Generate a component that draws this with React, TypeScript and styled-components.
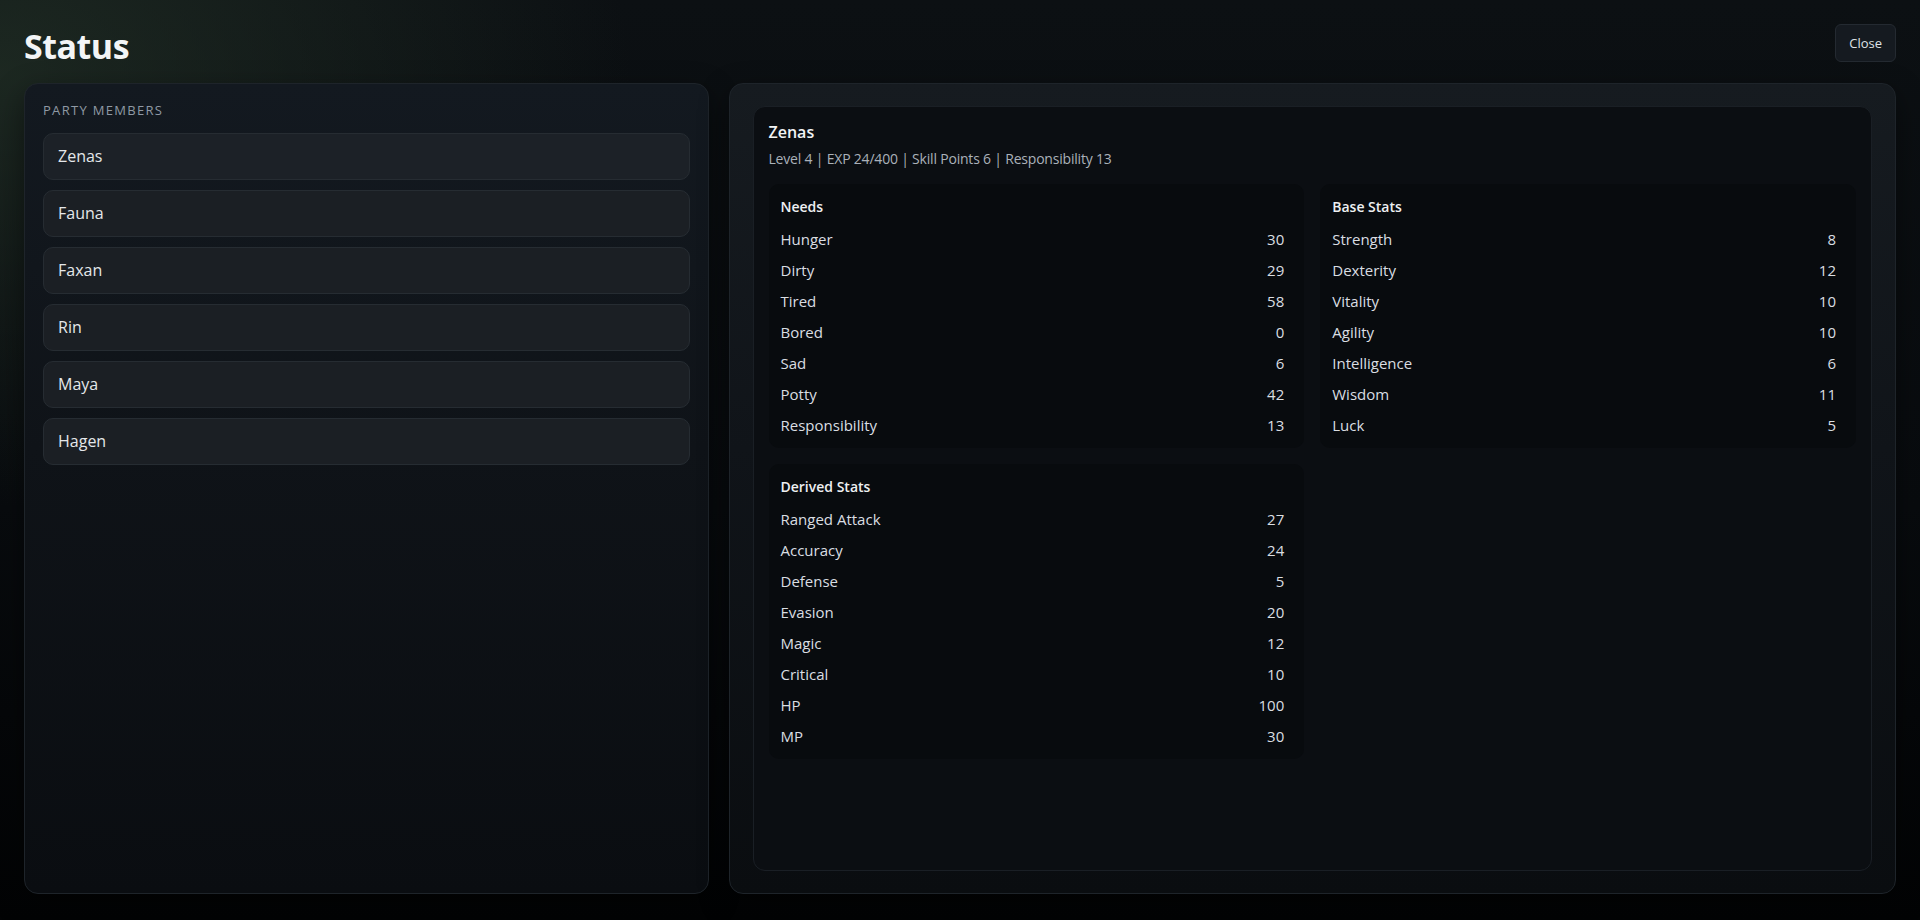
import React, { useState } from 'react';
import styled, { createGlobalStyle } from 'styled-components';

const GlobalStyle = createGlobalStyle`
  * {
    box-sizing: border-box;
  }

  html, body {
    margin: 0;
    padding: 0;
    background: #050708;
  }

  body {
    font-family: 'Open Sans', 'Noto Sans', 'Liberation Sans', sans-serif;
    color: #e6e8eb;
  }
`;

const Page = styled.div`
  height: 920px;
  padding: 24px 24px 26px;
  display: flex;
  flex-direction: column;
  background:
    radial-gradient(ellipse 900px 620px at 0% 8%, rgba(34, 48, 38, 0.75) 0%, rgba(34, 48, 38, 0) 70%),
    linear-gradient(180deg, #0c1013 0%, #080b0e 55%, #020304 100%);
  overflow: hidden;
`;

const Header = styled.header`
  height: 38px;
  display: flex;
  align-items: flex-start;
  justify-content: space-between;
  margin-bottom: 21px;
`;

const Title = styled.h1`
  margin: 3px 0 0;
  font-size: 34px;
  line-height: 38px;
  font-weight: 700;
  letter-spacing: -0.5px;
  color: #f3f5f6;
`;

const CloseButton = styled.button`
  font-family: inherit;
  font-size: 13px;
  line-height: 20px;
  padding: 8px 13px;
  color: #dfe3e6;
  background: #151a20;
  border: 1px solid #242a31;
  border-radius: 6px;
  cursor: pointer;
`;

const Layout = styled.main`
  flex: 1;
  min-height: 0;
  display: grid;
  grid-template-columns: 685px minmax(0, 1fr);
  gap: 19.5px;
`;

const Panel = styled.section<{ $tone: 'side' | 'main' }>`
  min-height: 0;
  border-radius: 14px;
  border: 1px solid #1e242a;
  background: ${({ $tone }) =>
    $tone === 'side'
      ? 'linear-gradient(180deg, #131920 0%, #0f1318 45%, #0a0d11 100%)'
      : 'linear-gradient(180deg, #161b20 0%, #101419 45%, #0a0d10 100%)'};
  box-shadow: 0 10px 30px rgba(0, 0, 0, 0.45);
`;

const SidePanel = styled(Panel)`
  padding: 18px;
  display: flex;
  flex-direction: column;
`;

const SectionLabel = styled.div`
  font-size: 13px;
  line-height: 16px;
  letter-spacing: 0.1em;
  text-transform: uppercase;
  color: #8f99a4;
  margin-bottom: 15px;
`;

const MemberList = styled.div`
  display: flex;
  flex-direction: column;
  gap: 10px;
`;

const MemberButton = styled.button<{ $active?: boolean }>`
  width: 100%;
  text-align: left;
  font-family: inherit;
  font-size: 16px;
  line-height: 23px;
  padding: 11px 14px;
  color: #e4e7ea;
  background: ${({ $active }) => ($active ? '#1c2127' : '#1b1f24')};
  border: 1px solid #262c32;
  border-radius: 10px;
  cursor: pointer;
`;

const MainPanel = styled(Panel)`
  padding: 22px 23px;
  display: flex;
`;

const DetailCard = styled.div`
  flex: 1;
  border: 1px solid #1a1f25;
  border-radius: 12px;
  background: #0b0e12;
  padding: 16px 15px;
`;

const CharName = styled.h2`
  margin: 0;
  font-size: 16px;
  line-height: 1.2;
  font-weight: 600;
  color: #f1f3f5;
`;

const CharMeta = styled.div`
  margin-top: 6px;
  font-size: 14px;
  line-height: 21px;
  letter-spacing: -0.2px;
  color: #aab1b9;
`;

const StatGrid = styled.div`
  margin-top: 15px;
  display: grid;
  grid-template-columns: 1fr 1fr;
  gap: 16px;
  align-items: start;
`;

const StatBox = styled.div`
  background: #080b0e;
  border-radius: 10px;
  padding: 12px 20px 11px 12px;
`;

const BoxTitle = styled.h3`
  margin: 0 0 11px;
  font-size: 14px;
  line-height: 21px;
  font-weight: 600;
  color: #eef0f2;
`;

const Rows = styled.div`
  display: flex;
  flex-direction: column;
  gap: 8px;
`;

const Row = styled.div`
  display: flex;
  justify-content: space-between;
  font-size: 15px;
  line-height: 23px;
  color: #dadee2;
`;

type Stat = [string, number];

const members = ['Zenas', 'Fauna', 'Faxan', 'Rin', 'Maya', 'Hagen'];

const needs: Stat[] = [
  ['Hunger', 30],
  ['Dirty', 29],
  ['Tired', 58],
  ['Bored', 0],
  ['Sad', 6],
  ['Potty', 42],
  ['Responsibility', 13],
];

const baseStats: Stat[] = [
  ['Strength', 8],
  ['Dexterity', 12],
  ['Vitality', 10],
  ['Agility', 10],
  ['Intelligence', 6],
  ['Wisdom', 11],
  ['Luck', 5],
];

const derivedStats: Stat[] = [
  ['Ranged Attack', 27],
  ['Accuracy', 24],
  ['Defense', 5],
  ['Evasion', 20],
  ['Magic', 12],
  ['Critical', 10],
  ['HP', 100],
  ['MP', 30],
];

const StatSection: React.FC<{ title: string; stats: Stat[] }> = ({ title, stats }) => (
  <StatBox>
    <BoxTitle>{title}</BoxTitle>
    <Rows>
      {stats.map(([label, value]) => (
        <Row key={label}>
          <span>{label}</span>
          <span>{value}</span>
        </Row>
      ))}
    </Rows>
  </StatBox>
);

const App: React.FC = () => {
  const [selected, setSelected] = useState('Zenas');

  return (
    <>
      <GlobalStyle />
      <Page>
        <Header>
          <Title>Status</Title>
          <CloseButton>Close</CloseButton>
        </Header>

        <Layout>
          <SidePanel $tone="side">
            <SectionLabel>Party Members</SectionLabel>
            <MemberList>
              {members.map((name) => (
                <MemberButton
                  key={name}
                  $active={name === selected}
                  onClick={() => setSelected(name)}
                >
                  {name}
                </MemberButton>
              ))}
            </MemberList>
          </SidePanel>

          <MainPanel $tone="main">
            <DetailCard>
              <CharName>{selected}</CharName>
              <CharMeta>Level 4 | EXP 24/400 | Skill Points 6 | Responsibility 13</CharMeta>
              <StatGrid>
                <StatSection title="Needs" stats={needs} />
                <StatSection title="Base Stats" stats={baseStats} />
                <StatSection title="Derived Stats" stats={derivedStats} />
              </StatGrid>
            </DetailCard>
          </MainPanel>
        </Layout>
      </Page>
    </>
  );
};

export default App;
